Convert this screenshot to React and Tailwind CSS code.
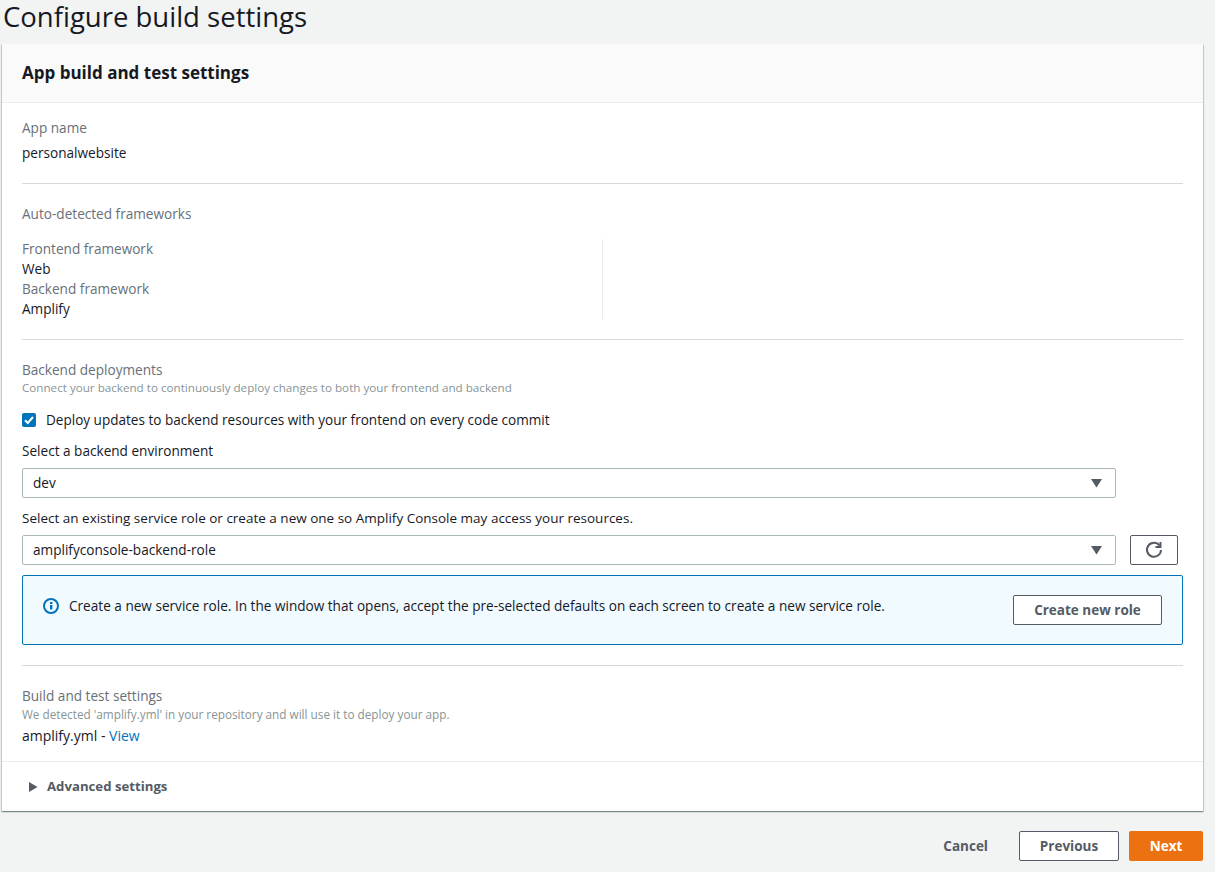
import React from "react";

const Divider = () => <div className="h-px bg-[#d5dbdb]" />;

const Caret = () => (
  <svg width="11" height="9" viewBox="0 0 11 9" className="absolute right-[13px] top-[10px]">
    <path d="M0 0h11L5.5 8.5z" fill="#545b64" />
  </svg>
);

const Select = ({ value }) => (
  <div className="relative h-[30px] w-[1094px] rounded-[2px] border border-[#aab7b8] bg-white pl-[10px] text-[13.6px] leading-[27px] text-[#16191f]">
    {value}
    <Caret />
  </div>
);

const App = () => {
  return (
    <div className="h-[872px] w-[1215px] overflow-hidden bg-[#f2f3f3] font-['Open_Sans','Noto_Sans',sans-serif] text-[13.6px] text-[#16191f]">
      <h1 className="h-[44px] pl-[3px] text-[27.5px] leading-[34px]">Configure build settings</h1>

      <div className="ml-[2px] w-[1201px] bg-white shadow-[0_1px_1px_0_rgba(0,28,36,0.3),1px_1px_1px_0_rgba(0,28,36,0.15),-1px_1px_1px_0_rgba(0,28,36,0.15)]">
        <div className="flex h-[59px] items-center border-b border-[#eaeded] bg-[#fafafa] pl-[20px] text-[17px] font-bold">
          App build and test settings
        </div>

        <div className="px-[20px]">
          <div className="pt-[15px] leading-[20px]">
            <div className="text-[#687078]">App name</div>
            <div className="mt-[5px]">personalwebsite</div>
          </div>
          <div className="mt-[20px]"><Divider /></div>

          <div className="pt-[20px] leading-[20px] text-[#687078]">Auto-detected frameworks</div>
          <div className="mt-[15px] h-[80px] w-[581px] border-r border-[#eaeded] leading-[20px]">
            <div className="text-[#687078]">Frontend framework</div>
            <div>Web</div>
            <div className="text-[#687078]">Backend framework</div>
            <div>Amplify</div>
          </div>
          <div className="mt-[20px]"><Divider /></div>

          <div className="pt-[20px] leading-[20px] text-[#687078]">Backend deployments</div>
          <div className="text-[11.65px] leading-[16px] text-[#879596]">
            Connect your backend to continuously deploy changes to both your frontend and backend
          </div>
          <div className="mt-[14px] flex h-[20px] items-center">
            <svg width="14" height="14" viewBox="0 0 14 14">
              <rect width="14" height="14" rx="2" fill="#0073bb" />
              <path d="M3 7.2l2.8 2.8L11 4" fill="none" stroke="#fff" strokeWidth="2" />
            </svg>
            <span className="ml-[10px] text-[13.55px]">Deploy updates to backend resources with your frontend on every code commit</span>
          </div>
          <div className="mt-[11px] leading-[20px]">Select a backend environment</div>
          <div className="mt-[7px]"><Select value="dev" /></div>
          <div className="mt-[10px] text-[13.5px] leading-[20px]">
            Select an existing service role or create a new one so Amplify Console may access your resources.
          </div>
          <div className="mt-[7px] flex items-center">
            <Select value="amplifyconsole-backend-role" />
            <button className="ml-[14px] flex h-[30px] w-[48px] items-center justify-center rounded-[2px] border border-[#545b64] bg-white">
              <svg width="18" height="18" viewBox="0 0 18 18" fill="none" stroke="#545b64" strokeWidth="2">
                <path d="M14.6 4.6A7 7 0 1 0 16 9" />
                <path d="M15.5 1v5h-5" />
              </svg>
            </button>
          </div>
          <div className="mt-[10px] flex h-[70px] items-center justify-between rounded-[2px] border border-[#0073bb] bg-[#f1faff] pl-[20px] pr-[20px]">
            <div className="flex items-center pb-[7px]">
              <svg width="16" height="16" viewBox="0 0 16 16">
                <circle cx="8" cy="8" r="7" fill="none" stroke="#0073bb" strokeWidth="2" />
                <rect x="7" y="7" width="2.4" height="4.5" fill="#0073bb" />
                <rect x="7" y="4" width="2.4" height="2" fill="#0073bb" />
              </svg>
              <span className="ml-[10px]">
                Create a new service role. In the window that opens, accept the pre-selected defaults on each screen to create a new service role.
              </span>
            </div>
            <button className="h-[30px] w-[149px] rounded-[2px] border border-[#545b64] bg-white text-[13.5px] font-bold text-[#545b64]">
              Create new role
            </button>
          </div>
          <div className="mt-[20px]"><Divider /></div>

          <div className="pt-[20px] leading-[20px] text-[#687078]">Build and test settings</div>
          <div className="text-[11.75px] leading-[16px] text-[#879596]">
            We detected 'amplify.yml' in your repository and will use it to deploy your app.
          </div>
          <div className="mt-[4px] text-[14px] leading-[20px]">
            amplify.yml - <span className="text-[#0073bb]">View</span>
          </div>
        </div>

        <div className="mt-[15px] flex h-[50px] items-center border-t border-[#eaeded] pl-[27px] text-[13.2px] font-bold text-[#545b64]">
          <svg width="9" height="10" viewBox="0 0 9 10">
            <path d="M0 0l8.5 5L0 10z" fill="#545b64" />
          </svg>
          <span className="ml-[9px]">Advanced settings</span>
        </div>
      </div>

      <div className="mt-[20px] flex items-center justify-end pr-[12px] text-[13.5px] font-bold text-[#545b64]">
        <span className="mr-[31px]">Cancel</span>
        <button className="h-[30px] w-[100px] rounded-[2px] border border-[#545b64] bg-white font-bold">Previous</button>
        <button className="ml-[10px] h-[30px] w-[74px] rounded-[2px] bg-[#ec7211] font-bold text-white">Next</button>
      </div>
    </div>
  );
};

export default App;
